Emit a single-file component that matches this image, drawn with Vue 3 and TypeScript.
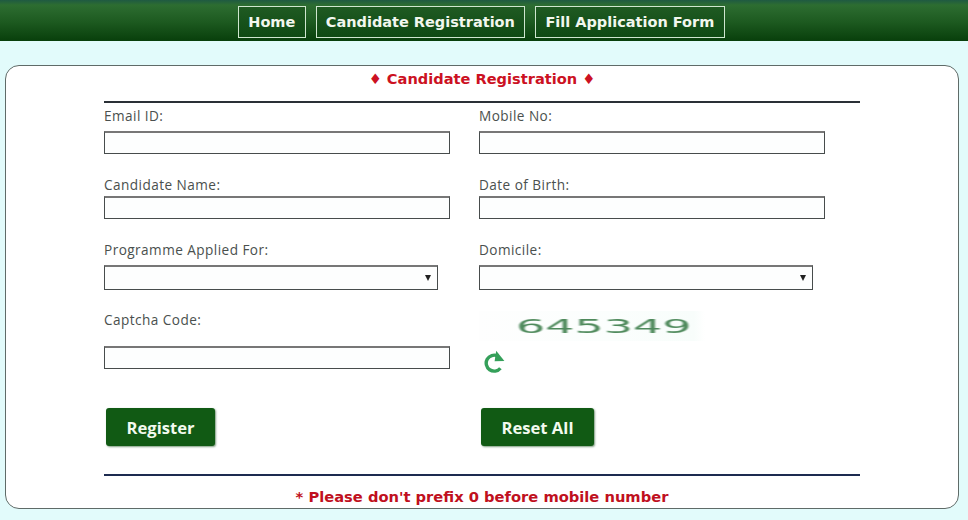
<script setup lang="ts">
const navItems: string[] = ['Home', 'Candidate Registration', 'Fill Application Form']
</script>

<template>
  <div class="page">
    <nav class="topbar">
      <a v-for="item in navItems" :key="item" class="navlink">{{ item }}</a>
    </nav>
    <main class="card">
      <h1 class="title">♦ Candidate Registration ♦</h1>
      <div class="form">
        <div class="rule top"></div>
        <div class="row r1">
          <div class="col"><label>Email ID:</label><div class="field"></div></div>
          <div class="col"><label>Mobile No:</label><div class="field"></div></div>
        </div>
        <div class="row r2">
          <div class="col"><label>Candidate Name:</label><div class="field"></div></div>
          <div class="col"><label>Date of Birth:</label><div class="field"></div></div>
        </div>
        <div class="row r3">
          <div class="col"><label>Programme Applied For:</label><div class="field select"><span class="caret"></span></div></div>
          <div class="col"><label>Domicile:</label><div class="field select"><span class="caret"></span></div></div>
        </div>
        <div class="row r4">
          <div class="col">
            <label>Captcha Code:</label>
            <div class="field cap-input"></div>
          </div>
          <div class="col">
            <div class="captcha"><span>645349</span></div>
            <svg class="refresh" width="22" height="26" viewBox="0 0 22 26" fill="none">
              <path d="M16.4 19.2A8 8 0 1 1 13.6 6.9" stroke="#35a05a" stroke-width="3.4" />
              <path d="M12.2 1.8 20.4 12 10.6 12.2Z" fill="#35a05a" />
            </svg>
          </div>
        </div>
        <div class="row r5">
          <div class="col"><button class="btn reg">Register</button></div>
          <div class="col"><button class="btn reset">Reset All</button></div>
        </div>
        <div class="rule bottom"></div>
        <p class="note">* Please don't prefix 0 before mobile number</p>
      </div>
    </main>
  </div>
</template>

<style>
html, body { margin: 0; background: #e2fbfb; }
</style>

<style scoped>
.page {
  width: 968px;
  height: 520px;
  overflow: hidden;
  background: #e2fbfb;
  font-family: "Open Sans", sans-serif;
}
.topbar {
  height: 41px;
  box-sizing: border-box;
  padding: 6px 0 0 238px;
  display: flex;
  gap: 10px;
  align-items: flex-start;
  background: linear-gradient(#1f5a42 0, #2d6d31 5px, #1d5a20 22px, #083f0b 41px);
}
.navlink {
  height: 32px;
  box-sizing: border-box;
  border: 1px solid #cfe6cf;
  padding: 0 9.25px;
  display: flex;
  align-items: center;
  color: #f2f7ee;
  font-family: "DejaVu Sans", sans-serif;
  font-size: 14.5px;
  font-weight: 700;
  white-space: nowrap;
  background: linear-gradient(#1f5a22, #0f4a13);
}
.card {
  margin: 24px 0 0 5px;
  width: 954px;
  height: 444px;
  box-sizing: border-box;
  border: 1px solid #5f6b68;
  border-radius: 14px;
  background: #fff;
  padding-top: 3px;
}
.title {
  margin: 0;
  text-align: center;
  font-family: "DejaVu Sans", sans-serif;
  font-size: 14.6px;
  line-height: 20px;
  font-weight: 700;
  color: #cc1122;
}
.form {
  width: 756px;
  margin: 12px 0 0 98px;
}
.rule {
  height: 2px;
  background: #2a3036;
}
.rule.bottom {
  background: #1d2b50;
  margin-top: 28px;
}
.row {
  display: flex;
}
.col {
  width: 375px;
}
label {
  display: block;
  font-size: 13.6px;
  letter-spacing: .45px;
  line-height: 16px;
  color: #4a504e;
}
.field {
  box-sizing: border-box;
  width: 346px;
  height: 23px;
  border: 1px solid #474c4c;
  border-top: 2px solid #777;
  background: #fdfefe;
}
.r1 { padding-top: 5px; }
.r1 label { margin-bottom: 7px; }
.r2 { padding-top: 23px; }
.r2 label { margin-bottom: 3px; }
.r3 { padding-top: 23px; }
.r3 label { margin-bottom: 7px; }
.select {
  width: 334px;
  height: 25px;
  position: relative;
}
.caret {
  position: absolute;
  right: 6px;
  top: 8px;
  width: 0;
  height: 0;
  border-left: 3px solid transparent;
  border-right: 3px solid transparent;
  border-top: 6px solid #222;
}
.r4 { padding-top: 22px; height: 64px; }
.r4 label { margin-bottom: 18px; }
.captcha {
  margin-top: -1px;
  width: 226px;
  height: 30px;
  display: flex;
  align-items: center;
  padding-left: 37px;
  box-sizing: border-box;
  background: linear-gradient(90deg, #fefefe, #fbfefd 60%, #f8fdfb 95%, #fff);
}
.captcha span {
  font-family: "DejaVu Sans", sans-serif;
  font-size: 19px;
  color: #4f8a5c;
  display: inline-block;
  transform: scaleX(2.42);
  transform-origin: left center;
  filter: blur(.4px);
}
.refresh {
  display: block;
  margin: 8px 0 0 5px;
}
.r5 { padding-top: 32px; }
.btn {
  height: 38px;
  margin-left: 2px;
  border: 0;
  border-radius: 3px;
  background: #115a14;
  box-shadow: 1px 1px 2px #7f9c80;
  color: #f3faef;
  font-family: "Open Sans", sans-serif;
  font-size: 16.6px;
  font-weight: 700;
  padding: 0;
}
.reg { width: 109px; }
.reset { width: 113px; }
.note {
  margin: 12px 0 0;
  text-align: center;
  font-family: "DejaVu Sans", sans-serif;
  font-size: 14.7px;
  line-height: 18px;
  font-weight: 700;
  color: #c01020;
}
</style>
